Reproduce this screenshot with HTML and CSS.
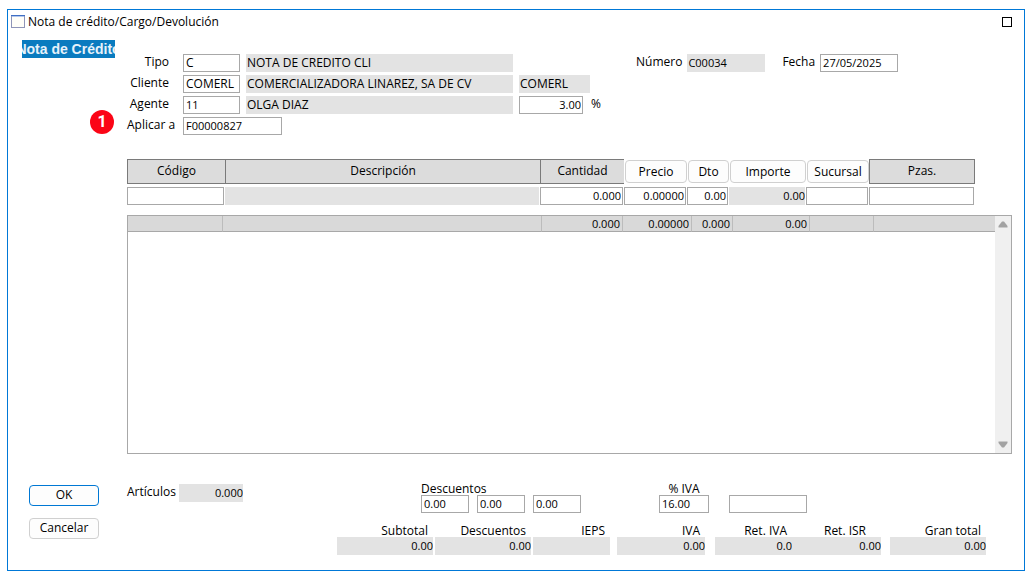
FILE: index.html
```html
<!DOCTYPE html>
<html lang="es">
<head>
    <meta charset="UTF-8">
    <meta name="viewport" content="width=device-width, initial-scale=1.0">
    <title>Nota de crédito/Cargo/Devolución</title>
    <link rel="stylesheet" href="styles.css">
</head>
<body>

    <form class="window">
        <header class="titlebar">
            <svg class="app-icon" width="14" height="13" viewBox="0 0 14 13">
                <rect x="0.5" y="0.5" width="13" height="12" fill="#fffef8" stroke="#8f95b8"/>
                <path d="M0 0.5h14" stroke="#3f6fc4"/>
                <path d="M1 1.5h12" stroke="#b4c8ee"/>
            </svg>
            <h1>Nota de crédito/Cargo/Devolución</h1>
            <button type="button" class="maximize" aria-label="Maximizar"></button>
        </header>

        <div class="content">
            <aside class="side">
                <div class="doc-type"><span>Nota de Crédito</span></div>
                <div class="step">
                    <span>1</span>
                </div>
            </aside>

            <main class="main">
                <section class="head">
                    <div class="head-grid">
                        <label for="tipo">Tipo</label>
                        <input type="text" id="tipo" class="name" value="C">
                        <input type="text" class="name locked" value="NOTA DE CREDITO CLI" aria-label="Descripción del tipo" readonly>

                        <label for="cliente">Cliente</label>
                        <input type="text" id="cliente" class="name" value="COMERL">
                        <input type="text" class="name locked" value="COMERCIALIZADORA LINAREZ, SA DE CV" aria-label="Nombre del cliente" readonly>
                        <input type="text" class="name locked short" value="COMERL" aria-label="Clave comercial" readonly>

                        <label for="agente">Agente</label>
                        <input type="text" id="agente" value="11">
                        <input type="text" class="name locked" value="OLGA DIAZ" aria-label="Nombre del agente" readonly>
                        <div class="percent">
                            <input type="text" id="comision" class="num" value="3.00">
                            <label for="comision">%</label>
                        </div>

                        <label for="aplicar" class="wide">Aplicar a</label>
                        <input type="text" id="aplicar" class="span" value="F00000827">
                    </div>
                    <div class="head-right">
                        <label for="numero">Número</label>
                        <input type="text" id="numero" class="locked" value="C00034" readonly>
                        <label for="fecha">Fecha</label>
                        <input type="text" id="fecha" value="27/05/2025">
                    </div>
                </section>

                <section class="entry">
                    <div class="entry-row entry-head">
                        <label for="codigo">Código</label>
                        <label for="descripcion">Descripción</label>
                        <label for="cantidad">Cantidad</label>
                        <button type="button">Precio</button>
                        <button type="button">Dto</button>
                        <button type="button">Importe</button>
                        <button type="button">Sucursal</button>
                        <label for="pzas" class="last">Pzas.</label>
                    </div>
                    <div class="entry-row entry-fields">
                        <input type="text" id="codigo">
                        <input type="text" id="descripcion" class="locked" readonly>
                        <input type="text" id="cantidad" class="num" value="0.000">
                        <input type="text" class="num" value="0.00000" aria-label="Precio">
                        <input type="text" class="num" value="0.00" aria-label="Dto">
                        <input type="text" class="num locked" value="0.00" aria-label="Importe" readonly>
                        <input type="text" aria-label="Sucursal">
                        <input type="text" id="pzas">
                    </div>
                </section>

                <section class="list">
                    <div class="list-rows">
                        <table>
                            <colgroup>
                                <col class="c-codigo">
                                <col>
                                <col class="c-cantidad">
                                <col class="c-precio">
                                <col class="c-dto">
                                <col class="c-importe">
                                <col class="c-sucursal">
                                <col class="c-pzas">
                            </colgroup>
                            <tbody>
                                <tr>
                                    <td></td>
                                    <td></td>
                                    <td>0.000</td>
                                    <td>0.00000</td>
                                    <td>0.000</td>
                                    <td>0.00</td>
                                    <td></td>
                                    <td></td>
                                </tr>
                            </tbody>
                        </table>
                    </div>
                    <div class="scrollbar">
                        <svg width="10" height="7" viewBox="0 0 10 7"><path d="M4 0.5h2L9.500 5v1.500h-9V5z" fill="#a3a3a3"/></svg>
                        <svg width="10" height="7" viewBox="0 0 10 7"><path d="M4 6.500h2L9.500 2V0.500h-9V2z" fill="#a3a3a3"/></svg>
                    </div>
                </section>
            </main>
        </div>

        <footer class="footer">
            <div class="actions">
                <button type="submit" class="primary">OK</button>
                <button type="button">Cancelar</button>
            </div>
            <div class="summary">
                <div class="summary-top">
                    <div class="articles">
                        <label for="articulos">Artículos</label>
                        <input type="text" id="articulos" class="num locked" value="0.000" readonly>
                    </div>
                    <div class="discounts">
                        <label for="desc1">Descuentos</label>
                        <div class="discount-fields">
                            <input type="text" id="desc1" value="0.00">
                            <input type="text" value="0.00" aria-label="Descuento 2">
                            <input type="text" value="0.00" aria-label="Descuento 3">
                        </div>
                    </div>
                    <div class="tax">
                        <label for="piva">% IVA</label>
                        <input type="text" id="piva" value="16.00">
                    </div>
                    <input type="text" class="extra" aria-label="Referencia">
                </div>
                <div class="totals">
                    <div class="t-large">
                        <label for="subtotal">Subtotal</label>
                        <input type="text" id="subtotal" class="num locked" value="0.00" readonly>
                    </div>
                    <div class="t-large">
                        <label for="descuentos">Descuentos</label>
                        <input type="text" id="descuentos" class="num locked" value="0.00" readonly>
                    </div>
                    <div class="t-small">
                        <label for="ieps">IEPS</label>
                        <input type="text" id="ieps" class="num locked" readonly>
                    </div>
                    <div class="t-medium">
                        <label for="iva">IVA</label>
                        <input type="text" id="iva" class="num locked" value="0.00" readonly>
                    </div>
                    <div class="t-small">
                        <label for="retiva">Ret. IVA</label>
                        <input type="text" id="retiva" class="num locked" value="0.0" readonly>
                    </div>
                    <div class="t-isr">
                        <label for="retisr">Ret. ISR</label>
                        <input type="text" id="retisr" class="num locked" value="0.00" readonly>
                    </div>
                    <div class="t-large">
                        <label for="total">Gran total</label>
                        <input type="text" id="total" class="num locked" value="0.00" readonly>
                    </div>
                </div>
            </div>
        </footer>
    </form>

</body>
</html>
```
FILE: styles.css
```css
* {
    box-sizing: border-box;
}
body {
    margin: 0;
    padding: 9px 11px 6px 7px;
    min-height: 100vh;
    display: flex;
    background-color: white;
    color: #000;
    font-family: "Open Sans", "Noto Sans", sans-serif;
    font-size: 12px;
    line-height: 16px;
}
input, button {
    font: inherit;
    color: inherit;
    margin: 0;
}
input {
    display: block;
    width: 100%;
    min-width: 0;
    height: 18px;
    padding: 0 2px 2px;
    border: 1px solid #a8a8a8;
    border-radius: 0;
    background-color: white;
    font-size: 11px;
}
input.locked {
    border: none;
    padding: 0 1px 2px;
    background-color: #e3e3e3;
}
input.name {
    font-size: 12px;
}
input.num {
    padding: 0 1px 2px;
    text-align: right;
}
input.num.locked {
    padding: 0 0 2px;
}
button {
    padding: 0 0 2px;
    border: 1px solid #d0d0d0;
    border-radius: 4px;
    background-color: #fdfdfd;
}

.window {
    flex: 1;
    display: flex;
    flex-direction: column;
    border: 1px solid #0078d7;
    padding-right: 12px;
}
.titlebar {
    display: flex;
    align-items: center;
    height: 24px;
    padding-left: 3px;
}
.titlebar h1 {
    flex: 1;
    margin: 0 0 0 3px;
    font-size: 12px;
    font-weight: normal;
}
.app-icon {
    margin-bottom: 1px;
}
.maximize {
    width: 10px;
    height: 10px;
    margin-bottom: 1px;
    border: 1px solid #000;
    border-radius: 0;
    background-color: white;
}

.content {
    flex: 1;
    display: flex;
    gap: 12px;
    padding: 6px 0 0 14px;
}
.side {
    width: 93px;
    display: flex;
    flex-direction: column;
}
.doc-type {
    display: flex;
    justify-content: center;
    height: 18px;
    overflow: hidden;
    background-color: #0a7bbf;
    color: #e6f2fa;
    font: bold 14px/18px "Liberation Sans", Arial, sans-serif;
    white-space: nowrap;
}
.step {
    display: flex;
    justify-content: flex-end;
    margin: 52px 1px 0 0;
}
.step span {
    width: 24px;
    height: 24px;
    border-radius: 50%;
    background-color: #fb0516;
    color: white;
    font: bold 16px/24px "Roboto", sans-serif;
    text-align: center;
}
.main {
    flex: 1;
    display: flex;
    flex-direction: column;
    padding-top: 14px;
}

.head {
    display: flex;
    gap: 33px;
}
.head-grid {
    display: grid;
    grid-template-columns: 50px 57px 267px 84px;
    column-gap: 6px;
    row-gap: 3px;
}
.head-grid > label {
    grid-column: 1;
    padding-right: 8px;
    text-align: right;
    white-space: nowrap;
}
.head-grid > label.wide {
    padding-right: 2px;
}
.head-grid .short {
    width: 71px;
}
.head-grid .span {
    grid-column: 2 / 4;
    width: 99px;
}
.percent {
    display: flex;
    gap: 8px;
}
.percent input {
    width: 64px;
}
.head-right {
    display: flex;
    height: 18px;
}
.head-right label {
    margin-right: 5px;
}
.head-right input {
    width: 78px;
    margin-right: 17px;
}

.entry {
    margin-top: 24px;
    padding-right: 37px;
}
.entry-row {
    display: grid;
    grid-template-columns: 98px 1fr 84px 63px 42px 77px 63px 106px;
}
.entry-head {
    height: 25px;
    line-height: 22px;
    text-align: center;
}
.entry-head label {
    border: 1px solid #7a7a7a;
    border-right: none;
    background-color: #dcdcdc;
}
.entry-head .last {
    border-right: 1px solid #7a7a7a;
}
.entry-head button {
    height: 23px;
    margin: 1px 0 0 1px;
}
.entry-fields {
    margin-top: 3px;
}
.entry-fields input {
    width: calc(100% - 1px);
}

.list {
    flex: 1;
    display: flex;
    margin-top: 10px;
    border: 1px solid #a8a8a8;
}
.list-rows {
    flex: 1;
}
.list table {
    width: 100%;
    table-layout: fixed;
    border-collapse: separate;
    border-spacing: 0;
}
.list td {
    height: 16px;
    padding: 1px 2px 0;
    border-right: 1px solid #bcbcbc;
    border-bottom: 1px solid #a8a8a8;
    background-color: #d9d9d9;
    font-size: 11px;
    line-height: 14px;
    text-align: right;
}
.list td:last-child {
    border-right: none;
}
.c-codigo {
    width: 95px;
}
.c-cantidad {
    width: 81px;
}
.c-precio {
    width: 69px;
}
.c-dto {
    width: 41px;
}
.c-importe {
    width: 77px;
}
.c-sucursal {
    width: 64px;
}
.c-pzas {
    width: 121px;
}
.scrollbar {
    width: 16px;
    display: flex;
    flex-direction: column;
    justify-content: space-between;
    align-items: center;
    padding: 5px 0;
    background-color: #f0f0f0;
}

.footer {
    display: flex;
    padding: 28px 0 15px 21px;
}
.actions {
    width: 98px;
    display: flex;
    flex-direction: column;
    gap: 12px;
    padding-top: 3px;
}
.actions button {
    width: 70px;
    height: 21px;
}
.actions .primary {
    border-color: #0078d4;
}
.summary {
    flex: 1;
}
.summary-top {
    display: flex;
}
.articles {
    display: flex;
    gap: 4px;
    width: 294px;
    padding-top: 2px;
}
.articles label {
    width: 48px;
}
.articles input {
    width: 64px;
}
.summary-top label {
    white-space: nowrap;
}
.discounts label, .tax label, .totals label {
    display: block;
    height: 13px;
    line-height: 14px;
}
.discounts {
    width: 238px;
}
.discount-fields {
    display: flex;
    gap: 8px;
}
.discount-fields input {
    width: 48px;
}
.tax {
    width: 50px;
}
.tax label {
    text-align: center;
}
.summary-top .extra {
    width: 78px;
    margin: 13px 0 0 20px;
}
.totals {
    display: grid;
    grid-template-columns: 98px 98px 84px 98px 77px 98px 96px;
    margin: 11px 0 0 210px;
}
.totals label {
    padding-right: 5px;
    text-align: right;
}
.t-large {
    width: 96px;
}
.t-medium {
    width: 88px;
}
.t-small {
    width: 77px;
}
.t-isr {
    width: 89px;
}
.totals .t-isr label {
    padding-right: 15px;
}
```
